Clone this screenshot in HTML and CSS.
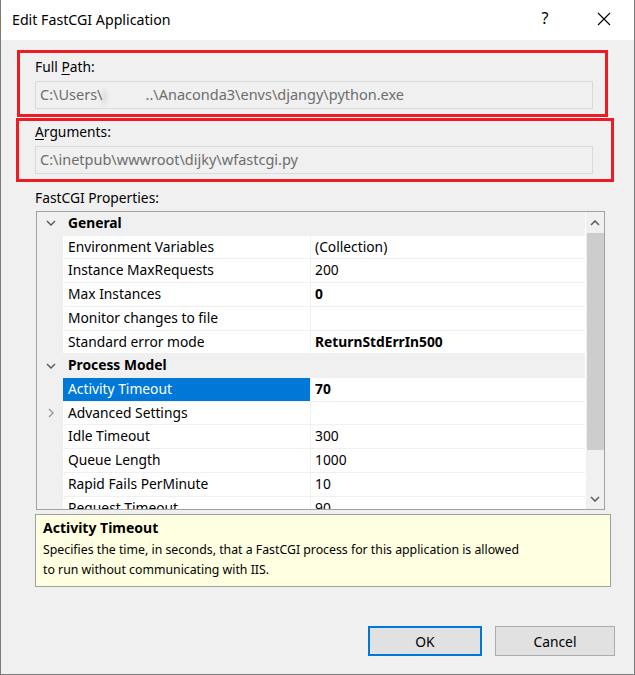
FILE: index.html
```html
<!DOCTYPE html>
<html>
<head>
<meta charset="utf-8">
<link rel="stylesheet" href="styles.css">
</head>
<body>
<div class="window">
  <div class="titlebar">
    <span class="title">Edit FastCGI Application</span>
    <div class="tb-buttons">
      <span class="help">?</span>
      <svg class="close" width="14" height="14" viewBox="0 0 14 14"><path d="M1 1 L13 13 M13 1 L1 13" stroke="#000" stroke-width="1.1" fill="none"/></svg>
    </div>
  </div>
  <div class="content">
    <div class="field">
      <div class="label">Full <u>P</u>ath:</div>
      <div class="textbox">C:\Users\<span class="blur">J</span>..\Anaconda3\envs\djangy\python.exe</div>
    </div>
    <div class="field second">
      <div class="label"><u>A</u>rguments:</div>
      <div class="textbox">C:\inetpub\wwwroot\dijky\wfastcgi.py</div>
    </div>
    <div class="label props-label">FastCGI Properties:</div>
    <div class="grid">
      <div class="rows">
        <div class="row cat"><span class="gut"><svg width="10" height="6" viewBox="0 0 10 6"><path d="M1 1 L5 5 L9 1" stroke="#555" stroke-width="1.4" fill="none"/></svg></span><span class="catname">General</span></div>
        <div class="row"><span class="gut"></span><span class="name">Environment Variables</span><span class="val">(Collection)</span></div>
        <div class="row"><span class="gut"></span><span class="name">Instance MaxRequests</span><span class="val">200</span></div>
        <div class="row"><span class="gut"></span><span class="name">Max Instances</span><span class="val bold">0</span></div>
        <div class="row"><span class="gut"></span><span class="name">Monitor changes to file</span><span class="val"></span></div>
        <div class="row"><span class="gut"></span><span class="name">Standard error mode</span><span class="val bold">ReturnStdErrIn500</span></div>
        <div class="row cat"><span class="gut"><svg width="10" height="6" viewBox="0 0 10 6"><path d="M1 1 L5 5 L9 1" stroke="#555" stroke-width="1.4" fill="none"/></svg></span><span class="catname">Process Model</span></div>
        <div class="row"><span class="gut"></span><span class="name selected">Activity Timeout</span><span class="val bold">70</span></div>
        <div class="row"><span class="gut"><svg width="6" height="10" viewBox="0 0 6 10"><path d="M1 1 L5 5 L1 9" stroke="#999" stroke-width="1.4" fill="none"/></svg></span><span class="name">Advanced Settings</span><span class="val"></span></div>
        <div class="row"><span class="gut"></span><span class="name">Idle Timeout</span><span class="val">300</span></div>
        <div class="row"><span class="gut"></span><span class="name">Queue Length</span><span class="val">1000</span></div>
        <div class="row"><span class="gut"></span><span class="name">Rapid Fails PerMinute</span><span class="val">10</span></div>
        <div class="row"><span class="gut"></span><span class="name">Request Timeout</span><span class="val">90</span></div>
      </div>
      <div class="scrollbar">
        <div class="sb-arrow"><svg width="10" height="6" viewBox="0 0 10 6"><path d="M1 5 L5 1 L9 5" stroke="#606060" stroke-width="1.6" fill="none"/></svg></div>
        <div class="sb-thumb"></div>
        <div class="sb-space"></div>
        <div class="sb-arrow"><svg width="10" height="6" viewBox="0 0 10 6"><path d="M1 1 L5 5 L9 1" stroke="#606060" stroke-width="1.6" fill="none"/></svg></div>
      </div>
    </div>
    <div class="desc">
      <div class="desc-title">Activity Timeout</div>
      <div class="desc-text">Specifies the time, in seconds, that a FastCGI process for this application is allowed to run without communicating with IIS.</div>
    </div>
    <div class="buttons">
      <button class="btn default">OK</button>
      <button class="btn">Cancel</button>
    </div>
  </div>
  <div class="annot annot1"></div>
  <div class="annot annot2"></div>
</div>
</body>
</html>
```
FILE: styles.css
```css
* { box-sizing: border-box; }
html, body { margin: 0; padding: 0; }
body {
  width: 635px;
  height: 675px;
  font-family: "Noto Sans", "Open Sans", sans-serif;
  font-size: 13.8px;
  color: #000;
  overflow: hidden;
}
.window {
  position: relative;
  width: 635px;
  height: 675px;
  background: #f0f0f0;
  border: 1px solid #7a7a7a;
  border-top: none;
}
.titlebar {
  height: 40px;
  background: #fff;
  display: flex;
  align-items: center;
  justify-content: space-between;
  padding-left: 11px;
}
.title {
  font-size: 14.2px;
  color: #000;
  margin-top: -1px;
}
.tb-buttons {
  display: flex;
  align-items: center;
  height: 40px;
}
.help {
  width: 46px;
  text-align: center;
  font-size: 16px;
  margin-top: -4px;
  margin-right: 29px;
}
.close {
  margin-right: 23px;
  margin-top: -2px;
}
.content {
  padding: 17px 0 0 34px;
}
.label {
  height: 19px;
  line-height: 19px;
  color: #000;
}
.label u { text-decoration: underline; text-underline-offset: 2px; }
.textbox {
  margin-top: 5px;
  width: 558px;
  height: 28px;
  border: 1px solid #d9d9d9;
  background: #f0f0f0;
  color: #6d6d6d;
  padding-left: 4px;
  line-height: 25px;
  white-space: nowrap;
  overflow: hidden;
  font-size: 14.5px;
}
.blur {
  display: inline-block;
  width: 43px;
  color: transparent;
  text-shadow: 0 0 4px rgba(90,90,90,0.35);
}
.field.second { margin-top: 13px; }
.props-label { margin-top: 14px; }
.grid {
  margin-top: 4px;
  margin-left: 1px;
  width: 569px;
  height: 299px;
  border: 1px solid #a0a0a0;
  background: #fff;
  display: flex;
  overflow: hidden;
}
.rows {
  flex: 1;
  overflow: hidden;
}
.row {
  height: 23.73px;
  display: flex;
  align-items: stretch;
  border-bottom: 1px solid #f0f0f0;
}
.gut {
  width: 26px;
  flex: none;
  background: #f0f0f0;
  display: flex;
  align-items: center;
  justify-content: center;
  padding-left: 1px;
}
.row.cat {
  background: #f0f0f0;
  border-bottom-color: #f0f0f0;
}
.catname {
  font-weight: bold;
  padding-left: 5px;
  line-height: 22px;
}
.name {
  width: 248px;
  flex: none;
  padding-left: 5px;
  line-height: 22px;
  white-space: nowrap;
  overflow: hidden;
  border-right: 1px solid #f0f0f0;
}
.name.selected {
  background: #0078d7;
  color: #fff;
}
.val {
  flex: 1;
  padding-left: 4px;
  line-height: 22px;
  white-space: nowrap;
}
.bold { font-weight: bold; }
.scrollbar {
  width: 19px;
  flex: none;
  background: #f0f0f0;
  display: flex;
  flex-direction: column;
  align-items: center;
  border-left: 1px solid #fff;
}
.sb-arrow {
  height: 21px;
  display: flex;
  align-items: center;
  justify-content: center;
  width: 100%;
}
.sb-thumb {
  width: 17px;
  height: 217px;
  background: #cdcdcd;
}
.sb-space { flex: 1; }
.desc {
  margin-top: 4px;
  width: 576px;
  height: 73px;
  border: 1px solid #a0a0a0;
  background: #ffffe1;
  padding: 3px 7px 0 7px;
  font-size: 14px;
}
.desc-title {
  font-weight: bold;
  line-height: 20px;
}
.desc-text {
  font-size: 12.3px;
  line-height: 20px;
  margin-top: 2px;
  max-width: 480px;
}
.buttons {
  margin-top: 39px;
  display: flex;
  justify-content: flex-end;
  gap: 13px;
  padding-right: 19px;
}
.btn {
  font-family: inherit;
  font-size: 13.8px;
  height: 30px;
  background: #e1e1e1;
  border: 1px solid #adadad;
  color: #000;
  padding: 0;
  width: 120px;
}
.btn.default {
  width: 114px;
  border: 2px solid #0078d7;
}
.annot {
  position: absolute;
  border: 3px solid #ed1c24;
}
.annot1 { left: 16px; top: 50px; width: 591px; height: 67px; }
.annot2 { left: 15px; top: 118px; width: 598px; height: 64px; }
```
